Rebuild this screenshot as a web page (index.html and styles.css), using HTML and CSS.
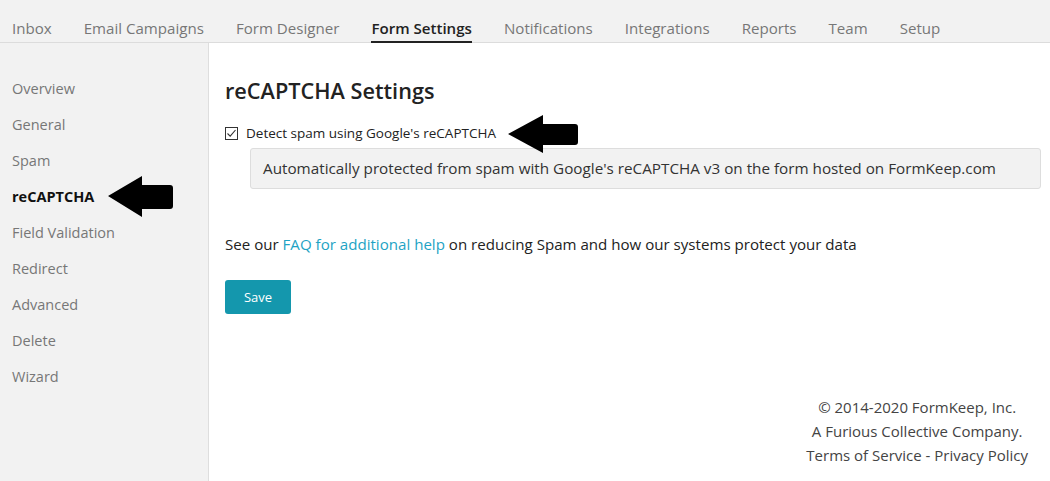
FILE: index.html
```html
<!DOCTYPE html>
<html>
<head>
<meta charset="utf-8">
<link rel="stylesheet" href="styles.css">
</head>
<body>
<nav class="topnav">
  <a class="tab">Inbox</a>
  <a class="tab">Email Campaigns</a>
  <a class="tab">Form Designer</a>
  <a class="tab active">Form Settings</a>
  <a class="tab">Notifications</a>
  <a class="tab">Integrations</a>
  <a class="tab">Reports</a>
  <a class="tab">Team</a>
  <a class="tab">Setup</a>
</nav>
<div class="layout">
  <aside class="sidebar">
    <a class="side-item">Overview</a>
    <a class="side-item">General</a>
    <a class="side-item">Spam</a>
    <a class="side-item active">reCAPTCHA
      <svg class="arrow arrow-side" width="67" height="42" viewBox="0 0 67 42"><path d="M0 20 L34 0 L34 9 L62 9 Q65 9 65 12 L65 30 Q65 33 62 33 L34 33 L34 41 Z" fill="#000"/></svg>
    </a>
    <a class="side-item">Field Validation</a>
    <a class="side-item">Redirect</a>
    <a class="side-item">Advanced</a>
    <a class="side-item">Delete</a>
    <a class="side-item">Wizard</a>
  </aside>
  <main class="main">
    <h1 class="title">reCAPTCHA Settings</h1>
    <label class="check-row">
      <svg class="checkbox" width="13" height="13" viewBox="0 0 13 13"><rect x="0.5" y="0.5" width="12" height="12" fill="#fff" stroke="#333"/><path d="M2.5 6.5 L5.2 9.2 L10.5 3" fill="none" stroke="#333" stroke-width="1.1"/></svg>
      <span class="check-label">Detect spam using Google's reCAPTCHA</span>
      <svg class="arrow arrow-top" width="72" height="39" viewBox="0 0 72 39"><path d="M0 19 L35 0 L35 9 L67 9 Q70 9 70 12 L70 27 Q70 30 67 30 L35 30 L35 38 Z" fill="#000"/></svg>
    </label>
    <div class="notice">Automatically protected from spam with Google's reCAPTCHA v3 on the form hosted on FormKeep.com</div>
    <p class="help">See our <a class="link">FAQ for additional help</a> on reducing Spam and how our systems protect your data</p>
    <button class="save">Save</button>
    <footer class="footer">
      <div class="footer-inner">
        <div>© 2014-2020 FormKeep, Inc.</div>
        <div>A Furious Collective Company.</div>
        <div>Terms of Service - Privacy Policy</div>
      </div>
    </footer>
  </main>
</div>
</body>
</html>
```
FILE: styles.css
```css
* { box-sizing: border-box; }
html, body { margin: 0; padding: 0; }
body {
  width: 1050px;
  height: 481px;
  overflow: hidden;
  font-family: "Open Sans", "Noto Sans", sans-serif;
  background: #fff;
  color: #222;
}
.topnav {
  display: flex;
  gap: 32px;
  height: 43px;
  padding: 0 0 0 12px;
  background: #f2f2f2;
  border-bottom: 1px solid #dcdcdc;
  align-items: stretch;
}
.tab {
  font-size: 15.1px;
  color: #777;
  padding-top: 17px;
  line-height: 22px;
  border-bottom: 2px solid transparent;
  margin-bottom: -1px;
}
.tab.active {
  color: #222;
  font-weight: 600;
  border-bottom-color: #222;
}
.layout {
  display: flex;
  height: 438px;
}
.sidebar {
  width: 209px;
  flex: none;
  background: #f2f2f2;
  border-right: 1px solid #dedede;
  padding-top: 28px;
  display: flex;
  flex-direction: column;
}
.side-item {
  position: relative;
  font-size: 14.5px;
  color: #777;
  line-height: 36px;
  padding-left: 12px;
}
.side-item.active {
  color: #111;
  font-weight: 700;
}
.arrow { position: absolute; }
.arrow-side { left: 108px; top: -3px; }
.main {
  flex: 1;
  display: flex;
  flex-direction: column;
  padding: 0 9px 14px 16px;
}
.title {
  margin: 33px 0 0;
  font-size: 21.7px;
  font-weight: 600;
  line-height: 30px;
  color: #222;
}
.check-row {
  position: relative;
  display: flex;
  align-items: center;
  margin-top: 16px;
  height: 22px;
}
.checkbox { margin-right: 8px; flex: none; }
.check-label {
  font-size: 13.5px;
  font-weight: 500;
  color: #222;
}
.arrow-top { left: 283px; top: -7px; }
.notice {
  margin: 4px 0 0 25px;
  height: 41px;
  background: #f2f2f2;
  border: 1px solid #ddd;
  border-radius: 3px;
  padding: 0 12px;
  font-size: 15.25px;
  line-height: 39px;
  color: #333;
}
.help {
  margin: 43px 0 0;
  font-size: 15.1px;
  line-height: 24px;
  color: #222;
}
.link { color: #1ea3c4; }
.save {
  margin-top: 24px;
  align-self: flex-start;
  width: 66px;
  height: 34px;
  background: #1497ad;
  color: #fff;
  border: none;
  border-radius: 3px;
  font-family: inherit;
  font-size: 13px;
}
.footer {
  margin-top: auto;
  display: flex;
  justify-content: flex-end;
  padding-right: 13px;
}
.footer-inner {
  text-align: center;
  font-size: 15px;
  line-height: 24px;
  color: #444;
}
```
